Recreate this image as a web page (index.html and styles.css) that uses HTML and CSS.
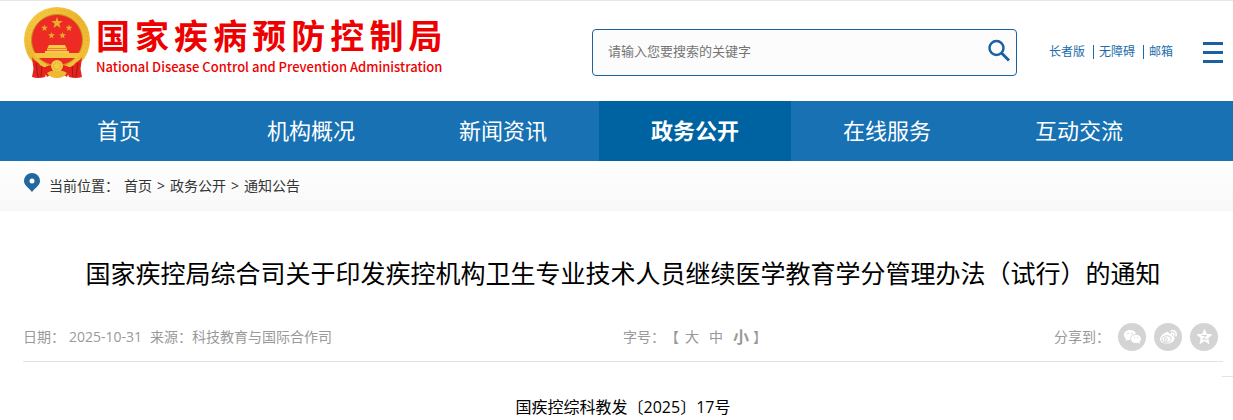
FILE: index.html
```html
<!DOCTYPE html>
<html lang="zh-CN">
<head>
<meta charset="utf-8">
<meta name="viewport" content="width=device-width, initial-scale=1">
<title>国家疾病预防控制局</title>
<link rel="stylesheet" href="styles.css">
</head>
<body>
<header class="header">
  <a class="brand" href="#">
    <svg class="emblem" viewBox="0 0 68 72" aria-hidden="true">
      <defs>
        <linearGradient id="gold" x1="0" y1="0" x2="1" y2="1">
          <stop offset="0" stop-color="#f7cf4a"/><stop offset=".5" stop-color="#eab52c"/><stop offset="1" stop-color="#f3c53c"/>
        </linearGradient>
        <path id="star" d="M0-6 1.4-1.9H5.7L2.3.7 3.5 4.9 0 2.4-3.5 4.9-2.3.7-5.7-1.9H-1.4Z"/>
      </defs>
      <circle cx="34" cy="33" r="33" fill="url(#gold)"/>
      <circle cx="34" cy="33" r="30" fill="none" stroke="#e0a828" stroke-width="1" stroke-dasharray="1 3"/>
      <circle cx="34" cy="33" r="25.500" fill="#ee2a24" stroke="#c98d1c" stroke-width="1"/>
      <g fill="#e6b02e">
        <use href="#star" transform="translate(34 16)"/>
        <use href="#star" transform="translate(21.500 21) scale(.6)"/>
        <use href="#star" transform="translate(46 21) scale(.6)"/>
        <use href="#star" transform="translate(28.500 28.500) scale(.6)"/>
        <use href="#star" transform="translate(39.500 28.500) scale(.6)"/>
      </g>
      <path d="M26 38h16l1.500 3H24.500zM24 41.500h20v2H24zM22 44h24v3H22z" fill="#f4ca48"/>
      <path d="M10.500 46h47l-2 5h-43z" fill="#f3c440"/>
      <path d="M9 50q2 4 9 7l8 1-4 12q-7 2-13 0l1.500-8zM59 50q-2 4-9 7l-8 1 4 12q7 2 13 0l-1.500-8z" fill="#e4241e"/>
      <path d="M13 56l2 14M19 58l-1 12M55 56l-2 14M49 58l1 12" stroke="#a81517" fill="none"/>
      <path d="M13 50q7 8 16 9l5-5 5 5q9-1 16-9-1 9-13 12l-5 2H31l-5-2q-12-3-13-12z" fill="#f2c138"/>
      <path d="M20 61q8-4 14-3 6-1 14 3l-4 9q-6-5-10 1-4-6-10-1z" fill="#e4241e"/>
      <circle cx="34" cy="59" r="6" fill="#f5cb45"/>
      <circle cx="34" cy="59" r="3.500" fill="none" stroke="#d7961d" stroke-dasharray="1 1"/>
      <path d="M24 66q6-4 10-1 4-3 10 1-3 5-10 5t-10-5z" fill="#edb832"/>
    </svg>
    <span class="brand-text">
      <span class="brand-cn">国家疾病预防控制局</span>
      <span class="brand-en">National Disease Control and Prevention Administration</span>
    </span>
  </a>
  <form class="search" role="search">
    <input class="search-input" type="search" placeholder="请输入您要搜索的关键字" aria-label="搜索关键字">
    <button class="search-button" type="button" aria-label="搜索">
      <svg width="24" height="24" viewBox="0 0 24 24" fill="none" stroke="#1b61a2"><circle cx="9.500" cy="9" r="7" stroke-width="2.500"/><path d="m14.500 14 7.500 7.500" stroke-width="3"/></svg>
    </button>
  </form>
  <nav class="tools" aria-label="辅助工具">
    <a href="#">长者版</a><a href="#">无障碍</a><a href="#">邮箱</a>
  </nav>
  <button class="menu-button" type="button" aria-label="菜单">
    <svg width="20" height="21" viewBox="0 0 20 21" fill="#1b61a2"><path d="M0 0h20v3H0zM0 9h20v3H0zM0 18h20v3H0z"/></svg>
  </button>
</header>
<nav class="main-nav" aria-label="主导航">
  <a href="#">首页</a>
  <a href="#">机构概况</a>
  <a href="#">新闻资讯</a>
  <a class="current" href="#" aria-current="page">政务公开</a>
  <a href="#">在线服务</a>
  <a href="#">互动交流</a>
</nav>
<nav class="breadcrumb" aria-label="当前位置">
  <svg class="pin" width="16" height="19" viewBox="0 0 16 19" aria-hidden="true"><path fill="#22689f" fill-rule="evenodd" d="M8 0a8 8 0 0 0-8 8c0 4 4 6 8 11 4-5 8-7 8-11a8 8 0 0 0-8-8zm0 5.500a2.500 2.500 0 1 1 0 5 2.500 2.500 0 0 1 0-5z"/></svg>
  <span class="crumb-label">当前位置：</span>
  <a href="#">首页</a><span>&gt;</span><a href="#">政务公开</a><span>&gt;</span><a href="#">通知公告</a>
</nav>
<main class="article">
  <h1 class="title">国家疾控局综合司关于印发疾控机构卫生专业技术人员继续医学教育学分管理办法（试行）的通知</h1>
  <div class="meta">
    <div class="source">
      <span>日期：</span>
      <time datetime="2025-10-31">2025-10-31</time>
      <span>来源：科技教育与国际合作司</span>
    </div>
    <div class="font-size">
      <span>字号：</span><span>【</span>
      <span class="sizes">
        <button type="button">大</button>
        <button type="button">中</button>
        <button class="selected" type="button">小</button>
      </span>
      <span>】</span>
    </div>
    <div class="share">
      <span class="share-label">分享到：</span>
      <a href="#" aria-label="微信"><svg viewBox="0 0 28 28"><circle cx="14" cy="14" r="14" fill="#d4d4d4"/><path fill="#fff" d="M12 7c-3.500 0-6 2.200-6 5 0 1.700.9 3 2.200 3.900L7.500 18l2.600-1.300c.8.200 1.500.3 2.400.2-.8-3.500 2-6 5.500-6C17.300 8.600 15 7 12 7z"/><path fill="#fff" d="M18 11.700c-2.900 0-5 1.900-5 4.200s2.100 4.200 5 4.200c.6 0 1.200-.1 1.800-.3l2.100 1.200-.5-1.900c1-.8 1.600-1.900 1.600-3.200 0-2.300-2.200-4.200-5-4.200z"/><g fill="#d4d4d4"><circle cx="10" cy="10.500" r=".8"/><circle cx="14" cy="10.500" r=".8"/><circle cx="16.500" cy="14.500" r=".6"/><circle cx="19.700" cy="14.500" r=".6"/></g></svg></a>
      <a href="#" aria-label="微博"><svg viewBox="0 0 28 28"><circle cx="14" cy="14" r="14" fill="#d4d4d4"/><path fill="#fff" d="M12.500 9c1.500-.7 2.700 0 2.200 2 2-.9 4.300-.6 3.600 1.700 1.500.4 2.500 1.400 2.300 2.900-.4 3-4 5-7.800 5S6 18.700 6 16.200 9.500 10 12.500 9z"/><ellipse cx="12.500" cy="16" rx="4.700" ry="3.300" fill="none" stroke="#d4d4d4" stroke-width="1" transform="rotate(-8 12.500 16)"/><circle cx="11.800" cy="16.500" r="1.600" fill="none" stroke="#d4d4d4" stroke-width="1"/><path d="M17.500 7.700c3.300-.8 5.600 2 4.500 5M17.800 10c1.500-.3 2.400.7 2 2.100" fill="none" stroke="#fff" stroke-width="1.600" stroke-linecap="round"/></svg></a>
      <a href="#" aria-label="QQ空间"><svg viewBox="0 0 28 28"><circle cx="14" cy="14" r="14" fill="#d4d4d4"/><path fill="#fff" stroke="#fff" stroke-linejoin="round" d="m14.500 6.500 2 4.800 5.200.4-4 3.400 1.300 5.400-4.500-2.800-4.500 2.800 1.200-5.400-4-3.400 5.300-.4z"/><path d="M11.500 12.500h5l-4 3.700h5" fill="none" stroke="#d4d4d4"/></svg></a>
    </div>
  </div>
  <p class="doc-number">国疾控综科教发〔2025〕17号</p>
</main>
<aside class="side-panel" aria-hidden="true"></aside>
</body>
</html>
```

FILE: styles.css
```css
* { box-sizing: border-box; }

body {
  margin: 0;
  background: #fff;
  color: #333;
  font-family: "Open Sans", "Noto Sans CJK SC", sans-serif;
  font-size: 14px;
  line-height: 20px;
}

a { color: inherit; text-decoration: none; }

button {
  padding: 0;
  border: 0;
  background: none;
  color: inherit;
  font: inherit;
  cursor: pointer;
}

svg { display: block; }

.header {
  display: flex;
  align-items: center;
  padding: 6px 10px 4px 23px;
  border-top: 1px solid #e3e6ea;
}

.brand {
  display: flex;
  align-items: center;
  gap: 5px;
  padding-bottom: 18px;
  color: #ee0000;
  font-family: "Noto Sans CJK SC", sans-serif;
}

.emblem { width: 68px; height: 72px; }

.brand-text {
  display: flex;
  flex-direction: column;
  padding-top: 8px;
}

.brand-cn {
  width: 0;
  min-width: 100%;
  font-size: 34px;
  font-weight: 700;
  line-height: 40px;
  white-space: nowrap;
  text-align: justify;
  text-align-last: justify;
}

.brand-en {
  font-size: 13px;
  font-weight: 500;
  line-height: 24px;
  white-space: nowrap;
}

.search {
  display: flex;
  align-items: center;
  flex: 0 1 425px;
  height: 47px;
  margin-left: auto;
  padding: 0 5px 3px 15px;
  border: 1px solid #1b61a2;
  border-radius: 4px;
  background: #fcfcfc;
}

.search-input {
  flex: 1;
  min-width: 0;
  padding: 0;
  border: 0;
  outline: 0;
  background: none;
  font: inherit;
  font-size: 13px;
}

.search-input::placeholder { color: #757575; }

.tools {
  display: flex;
  margin-left: 32px;
  color: #1b6cad;
  font-size: 12px;
  line-height: 14px;
}

.tools a + a {
  margin-left: 8px;
  padding-left: 5px;
  border-left: 1px solid #1b6cad;
}

.menu-button { margin-left: 30px; }

.main-nav {
  display: grid;
  grid-template-columns: repeat(6, 16%);
  padding: 0 10px 0 23px;
  background: #1771b3;
  color: #fff;
  font-size: 22px;
  line-height: 58px;
  text-align: center;
}

.main-nav a { padding-bottom: 2px; }

.main-nav .current { background: #0063a1; font-weight: 700; }

.breadcrumb {
  display: flex;
  align-items: center;
  gap: 5px;
  height: 50px;
  padding: 0 24px;
  background: linear-gradient(#fff, #f8f8f8);
}

.pin { margin-bottom: 8px; }

.crumb-label { margin-left: 4px; }

.article { padding: 42px 10px 0 23px; }

.title {
  margin: 0;
  color: #000;
  font-size: 25px;
  font-weight: 400;
  line-height: 40px;
  text-align: center;
}

.meta {
  display: flex;
  align-items: center;
  margin-top: 30px;
  padding-bottom: 10px;
  border-bottom: 1px solid #e3e3e3;
  color: #999;
}

.source, .font-size, .sizes, .share { display: flex; align-items: center; }

.source { width: 50%; gap: 4px; }

.source time { margin-right: 4px; }

.sizes { gap: 10px; padding: 0 4px 0 6px; }

.sizes .selected { font-size: 16px; font-weight: 700; }

.share { margin-left: auto; gap: 8px; padding-right: 5px; }

.share svg { width: 28px; height: 28px; }

.doc-number {
  margin: 33px 0 0;
  color: #000;
  font-size: 16px;
  line-height: 24px;
  text-align: center;
}

/* Edge of the collapsed panel that floats over the page's right side */
.side-panel {
  position: absolute;
  top: 376px;
  right: 0;
  width: 11px;
  border-top: 1px solid #e3e3e3;
}
```
